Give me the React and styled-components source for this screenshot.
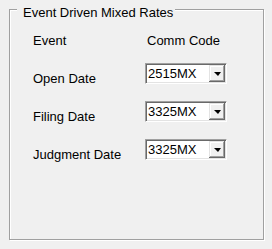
import React from 'react'
import styled, { createGlobalStyle } from 'styled-components'

const GlobalStyle = createGlobalStyle`
    body {
        margin: 0;
        background: #f0f0f0;
        font-family: 'Liberation Sans', Arial, sans-serif;
        font-size: 13px;
        color: #000;
    }
`;

const Page = styled.div`
    width: 272px;
    height: 249px;
    box-sizing: border-box;
    padding: 9px 8px 9px 9px;
`;

// ---- Group box (etched frame with caption) ----

const GroupBox = styled.div`
    box-sizing: border-box;
    width: 255px;
    height: 231px;
    border: 1px solid #a0a0a0;
    box-shadow: inset 1px 1px 0 #fff, 1px 1px 0 #fff;
    display: flex;
    flex-flow: column nowrap;
`;

const Caption = styled.div`
    align-self: flex-start;
    height: 15px;
    margin: -5px 0 0 7px;
    padding: 0 2px 0 6px;
    background: #f0f0f0;
    line-height: 15px;
    white-space: nowrap;
`;

const Fields = styled.div`
    display: flex;
    flex-flow: column nowrap;
    gap: 17px;
    padding: 13px 0 0 23px;
`;

const Row = styled.div`
    display: grid;
    grid-template-columns: 112px 82px;
    align-items: start;
    height: ${p => p.$head ? '13px' : '21px'};
`;

const Label = styled.div`
    line-height: 15px;
    padding-top: ${p => p.$head ? '0' : '8px'};
    padding-left: ${p => p.$indent ? '2px' : '0'};
    white-space: nowrap;
`;

// ---- Combo box ----

const Combo = styled.div`
    box-sizing: border-box;
    width: 82px;
    height: 21px;
    border: 1px solid;
    border-color: #a0a0a0 #fff #fff #a0a0a0;
    box-shadow: inset 1px 1px 0 #696969, inset -1px -1px 0 #e3e3e3;
    background: #fff;
    display: flex;
    padding: 1px;
`;

const ComboText = styled.div`
    flex: 1;
    padding-left: 1px;
    line-height: 17px;
`;

const DropButton = styled.div`
    width: 16px;
    height: 17px;
    box-sizing: border-box;
    background: #f0f0f0;
    box-shadow: inset -1px -1px 0 #696969, inset 1px 1px 0 #e3e3e3,
        inset -2px -2px 0 #a0a0a0, inset 2px 2px 0 #fff;
    display: flex;
    align-items: center;
    justify-content: center;
`;

const Arrow = styled.div`
    width: 0;
    height: 0;
    border-left: 4px solid transparent;
    border-right: 3px solid transparent;
    border-top: 4px solid #000;
    margin-top: 1px;
`;

const rows = [
    { label: 'Open Date', code: '2515MX' },
    { label: 'Filing Date', code: '3325MX' },
    { label: 'Judgment Date', code: '3325MX' },
];

export default function App() {
    return (
        <Page>
            <GlobalStyle />
            <GroupBox>
                <Caption>Event Driven Mixed Rates</Caption>
                <Fields>
                    <Row $head>
                        <Label $head>Event</Label>
                        <Label $head $indent>Comm Code</Label>
                    </Row>
                    {rows.map(r => (
                        <Row key={r.label}>
                            <Label>{r.label}</Label>
                            <Combo>
                                <ComboText>{r.code}</ComboText>
                                <DropButton><Arrow /></DropButton>
                            </Combo>
                        </Row>
                    ))}
                </Fields>
            </GroupBox>
        </Page>
    )
}
